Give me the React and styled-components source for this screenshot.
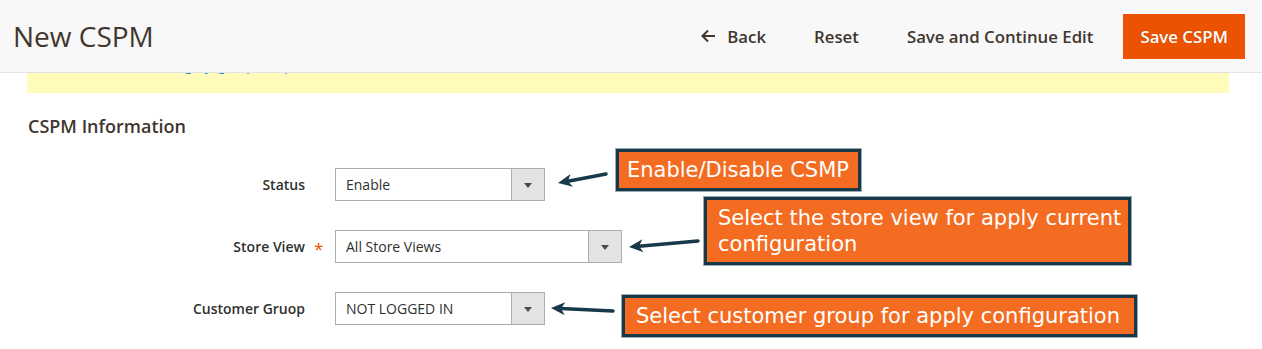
import styled, { createGlobalStyle } from "styled-components";

const GlobalStyle = createGlobalStyle`
  html, body {
    margin: 0;
    padding: 0;
    background: #ffffff;
    font-family: "Open Sans", "Liberation Sans", sans-serif;
    overflow: hidden;
  }
  * { box-sizing: border-box; }
`;

const Page = styled.div`
  width: 1262px;
  height: 349px;
  position: relative;
`;

const Header = styled.header`
  position: relative;
  z-index: 2;
  height: 73px;
  background: #f8f8f8;
  border-bottom: 1px solid #e3e3e3;
  display: flex;
  align-items: center;
  padding: 0 17px 0 13px;
`;

const Title = styled.h1`
  margin: 0;
  font-size: 28px;
  font-weight: 400;
  color: #41362f;
  flex: 1;
  line-height: 36px;
`;

const Actions = styled.div`
  display: flex;
  align-items: center;
`;

const TextButton = styled.button`
  border: 0;
  background: transparent;
  font-family: inherit;
  font-size: 16.8px;
  font-weight: 600;
  color: #41362f;
  padding: 0 24px;
  height: 45px;
  display: flex;
  align-items: center;
  gap: 11px;
  cursor: pointer;
`;

const PrimaryButton = styled.button`
  margin-left: 6px;
  border: 0;
  background: #eb5202;
  color: #ffffff;
  font-family: inherit;
  font-size: 16.8px;
  font-weight: 600;
  height: 45px;
  padding: 0 17px;
  text-shadow: 0 0 1px rgba(0, 0, 0, 0.25);
  cursor: pointer;
`;

const Notice = styled.div`
  margin: 0 33px 0 27px;
  height: 20px;
  background: #fffbbb;
  overflow: hidden;
`;

const NoticeText = styled.div`
  margin-top: -15px;
  padding-left: 25px;
  display: flex;
  align-items: center;
  gap: 8px;
  font-size: 13px;
  color: #007bdb;
  line-height: 16px;
`;

const Dot = styled.span`
  width: 12px;
  height: 12px;
  border-radius: 50%;
  border: 2px solid #007bdb;
  margin-top: 2px;
`;

const Content = styled.main`
  padding: 21px 0 0 28px;
`;

const SectionTitle = styled.h2`
  margin: 0;
  font-size: 18px;
  font-weight: 600;
  color: #41362f;
  line-height: 24px;
`;

const Fields = styled.div`
  margin-top: 30px;
  display: flex;
  flex-direction: column;
  gap: 29px;
`;

const Row = styled.div`
  height: 33px;
  display: flex;
  align-items: center;
`;

const Label = styled.label`
  width: 277px;
  text-align: right;
  font-size: 14px;
  font-weight: 600;
  color: #303030;
`;

const Required = styled.span`
  width: 30px;
  padding-left: 9px;
  color: #eb5202;
  font-size: 17px;
  line-height: 14px;
  padding-top: 4px;
`;

const Select = styled.div`
  width: ${(p) => p.$width}px;
  height: 33px;
  border: 1px solid #adadad;
  background: #ffffff;
  display: flex;
  align-items: stretch;
  flex-shrink: 0;
`;

const SelectValue = styled.span`
  flex: 1;
  display: flex;
  align-items: center;
  padding-left: 10px;
  font-size: 14px;
  color: #303030;
`;

const SelectArrow = styled.span`
  width: 33px;
  background: #e3e3e3;
  border-left: 1px solid #adadad;
  display: flex;
  align-items: center;
  justify-content: center;

  &::after {
    content: "";
    border-left: 4px solid transparent;
    border-right: 4px solid transparent;
    border-top: 5px solid #514943;
    margin-top: 1px;
  }
`;

const Pointer = styled.svg`
  flex-shrink: 0;
  overflow: visible;
  margin-left: ${(p) => p.$gap}px;
`;

const Callout = styled.div`
  flex-shrink: 0;
  width: ${(p) => p.$width}px;
  transform: translateY(${(p) => p.$shift}px);
  background: #f36c21;
  border: 3px solid #17394a;
  box-shadow: 0 0 0 1px #9aabb3;
  padding: 5px 4px 5px ${(p) => p.$pad}px;
  font-family: "DejaVu Sans", Verdana, sans-serif;
  font-size: 21px;
  line-height: 26px;
  color: #ffffff;
  white-space: ${(p) => (p.$wrap ? "normal" : "nowrap")};
`;

function Arrow({ w, h, gap, tail, tip }) {
  const [x1, y1] = tail;
  const [x2, y2] = tip;
  const a = Math.atan2(y1 - y2, x1 - x2);
  const len = 14;
  const half = 6.5;
  const bx = x2 + Math.cos(a) * len;
  const by = y2 + Math.sin(a) * len;
  const nx = x2 + Math.cos(a) * (len - 4);
  const ny = y2 + Math.sin(a) * (len - 4);
  const px = -Math.sin(a) * half;
  const py = Math.cos(a) * half;
  const head = `${x2},${y2} ${bx + px},${by + py} ${nx},${ny} ${bx - px},${by - py}`;
  return (
    <Pointer width={w} height={h} viewBox={`0 0 ${w} ${h}`} $gap={gap}>
      <line x1={x1} y1={y1} x2={nx} y2={ny} stroke="#17394a" strokeWidth="3.5" strokeLinecap="round" />
      <polygon points={head} fill="#17394a" />
    </Pointer>
  );
}

function BackIcon() {
  return (
    <svg width="15" height="14" viewBox="0 0 15 14">
      <path d="M14 7H2M7 1.5L1.5 7 7 12.5" fill="none" stroke="#41362f" strokeWidth="2" />
    </svg>
  );
}

const fields = [
  {
    label: "Status",
    value: "Enable",
    width: 210,
    arrow: { w: 68, h: 40, gap: 3, tail: [58, 9], tip: [10, 18] },
    callout: { width: 245, shift: -15, pad: 8, text: "Enable/Disable CSMP" },
  },
  {
    label: "Store View",
    required: true,
    value: "All Store Views",
    width: 287,
    arrow: { w: 79, h: 40, gap: 3, tail: [73, 14], tip: [4, 20] },
    callout: {
      width: 427,
      shift: -16,
      pad: 11,
      wrap: true,
      text: "Select the store view for apply current configuration",
    },
  },
  {
    label: "Customer Gruop",
    value: "NOT LOGGED IN",
    width: 210,
    arrow: { w: 74, h: 40, gap: 3, tail: [65, 22], tip: [3, 19] },
    callout: { width: 515, shift: 7, pad: 11, text: "Select customer group for apply configuration" },
  },
];

export default function App() {
  return (
    <Page>
      <GlobalStyle />
      <Header>
        <Title>New CSPM</Title>
        <Actions>
          <TextButton>
            <BackIcon />
            Back
          </TextButton>
          <TextButton>Reset</TextButton>
          <TextButton>Save and Continue Edit</TextButton>
          <PrimaryButton>Save CSPM</PrimaryButton>
        </Actions>
      </Header>
      <Notice>
        <NoticeText>
          <Dot />
          Please set the category, group and price for this rule
        </NoticeText>
      </Notice>
      <Content>
        <SectionTitle>CSPM Information</SectionTitle>
        <Fields>
          {fields.map((f) => (
            <Row key={f.label}>
              <Label>{f.label}</Label>
              <Required>{f.required ? "*" : ""}</Required>
              <Select $width={f.width}>
                <SelectValue>{f.value}</SelectValue>
                <SelectArrow />
              </Select>
              <Arrow {...f.arrow} />
              <Callout
                $width={f.callout.width}
                $shift={f.callout.shift}
                $pad={f.callout.pad}
                $wrap={f.callout.wrap}
              >
                {f.callout.text}
              </Callout>
            </Row>
          ))}
        </Fields>
      </Content>
    </Page>
  );
}
